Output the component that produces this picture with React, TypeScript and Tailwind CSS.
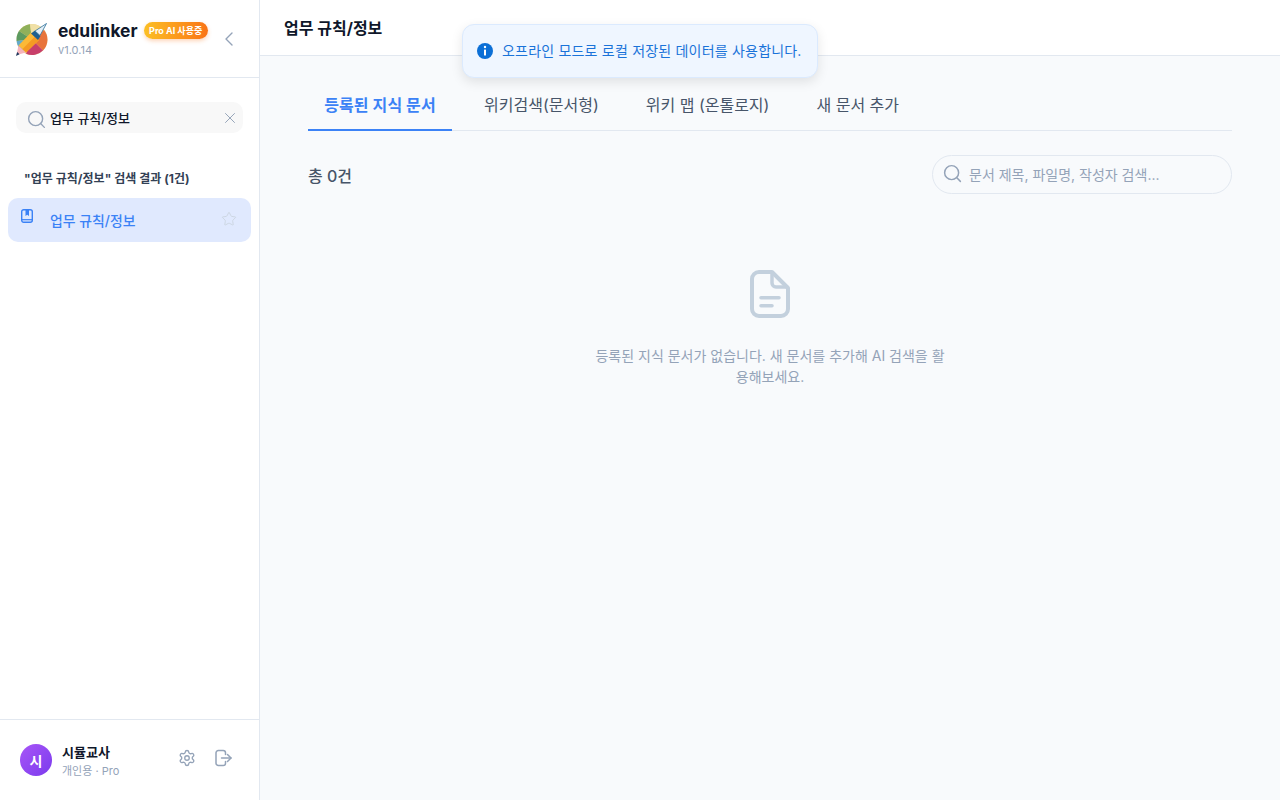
import React from "react";
import { ChevronLeft, Search, X, Star, Settings } from "lucide-react";

function Logo() {
  return (
    <svg width="34" height="34" viewBox="0 0 34 34" className="shrink-0">
      <circle cx="17" cy="17.500" r="15.500" fill="#e9d79a" />
      <path d="M17 17.500 L4 9 A15.500 15.500 0 0 1 15 2.200 Z" fill="#8fb05a" />
      <path d="M17 17.500 L15 2.200 A15.500 15.500 0 0 1 27 6 Z" fill="#f0e0a6" />
      <path d="M17 17.500 L1.600 19 A15.500 15.500 0 0 1 4 9 Z" fill="#5c9a60" />
      <path d="M17 17.500 L8 30 A15.500 15.500 0 0 1 1.600 19 Z" fill="#63aacb" />
      <path d="M17 17.500 L29 8 A15.500 15.500 0 0 1 28 28.500 Z" fill="#e8743b" />
      <path d="M17 17.500 L28 28.500 A15.500 15.500 0 0 1 11 31.800 Z" fill="#c83f6a" />
      <path d="M1.500 33 L3.500 23.500 L11 30.500 Z" fill="#f6b3ba" />
      <path d="M3.500 23.500 L16 10.500 L24 18 L11 30.500 Z" fill="#fcb937" />
      <path d="M7.500 27 L20 14.500 L24 18 L11 30.500 Z" fill="#f59a23" />
      <path d="M16 11.500 L20 8.500 L25.500 14 L23 18 Z" fill="#1f5f8f" />
      <path d="M20 9 L31.500 1.500 L25 13.500 Z" fill="#e3eef7" stroke="#2d7099" strokeWidth="0.8" />
      <path d="M1 34 L2.200 30 L4.500 32.200 Z" fill="#1e3a5f" />
    </svg>
  );
}

function BookIcon() {
  return (
    <svg width="14" height="16" viewBox="0 0 14 16" fill="none" className="mb-[8px] shrink-0">
      <rect x="1.700" y="1.700" width="10.600" height="12.600" rx="2" stroke="#3b82f6" strokeWidth="1.400" />
      <path d="M1.700 11.700 H12.300" stroke="#3b82f6" strokeWidth="1.200" />
      <path d="M5.500 1.500 H9 V8 L7.250 6.800 L5.500 8 Z" fill="#3b82f6" />
    </svg>
  );
}

function FileIcon() {
  return (
    <svg width="48" height="48" viewBox="0 0 48 48" fill="none" stroke="#c3d0dd" strokeWidth="4" strokeLinecap="round" strokeLinejoin="round">
      <path d="M26 2 H13 a7 7 0 0 0 -7 7 V39 a7 7 0 0 0 7 7 H35 a7 7 0 0 0 7 -7 V18 Z" />
      <path d="M26 3 V13 a4 4 0 0 0 4 4 H41" strokeWidth="3.500" />
      <path d="M15 27.700 H33" strokeWidth="3.500" />
      <path d="M15 35.700 H26" strokeWidth="3.500" />
    </svg>
  );
}

function ExitIcon() {
  return (
    <svg width="18" height="18" viewBox="0 0 18 18" fill="none" stroke="#94a3b8" strokeWidth="1.500" strokeLinecap="round" strokeLinejoin="round" className="ml-[18px]">
      <path d="M11.500 5.500 V3.800 A2.300 2.300 0 0 0 9.200 1.500 H4.300 A2.300 2.300 0 0 0 2 3.800 V14.200 A2.300 2.300 0 0 0 4.300 16.500 H9.200 A2.300 2.300 0 0 0 11.500 14.200 V12.500" />
      <path d="M7.500 9 H17" />
      <path d="M13.500 5.500 L17 9 L13.500 12.500" />
    </svg>
  );
}

export default function App() {
  return (
    <div
      className="relative flex h-[800px] w-[1280px] overflow-hidden bg-[#f8fafc] text-[#0f172a]"
      style={{ fontFamily: 'Inter, "Noto Sans CJK KR", sans-serif' }}
    >
      <aside className="flex h-full w-[260px] shrink-0 flex-col border-r border-[#e2e8f0] bg-white">
        <div className="flex h-[78px] items-center border-b border-[#e2e8f0] pl-[15px] pr-[18px]">
          <Logo />
          <div className="ml-[9px] flex flex-col">
            <div className="flex items-center gap-[6px]">
              <span className="text-[17.400px] font-bold leading-[22px] text-[#0f172a]">edulinker</span>
              <span className="flex h-[17px] items-center rounded-full bg-gradient-to-r from-[#fbbf24] to-[#f97316] px-[5.500px] text-[9px] font-bold text-white shadow-[0_2px_4px_rgba(249,115,22,0.3)]">
                Pro AI 사용중
              </span>
            </div>
            <span className="text-[11px] leading-[16px] text-[#94a3b8]">v1.0.14</span>
          </div>
          <ChevronLeft className="ml-auto text-[#94a3b8]" size={24} strokeWidth={1.4} />
        </div>

        <div className="px-4 pt-6">
          <div className="flex h-[31px] items-center rounded-[10px] bg-[#f8f8f8] pl-[9.500px] pr-[4px]">
            <Search size={21} strokeWidth={1.6} className="mt-[4px] shrink-0 text-[#94a3b8]" />
            <span className="ml-[3.500px] pt-[2px] text-[13px] font-medium text-[#0f172a]">업무 규칙/정보</span>
            <X size={18} strokeWidth={1.3} className="ml-auto text-[#94a3b8]" />
          </div>
        </div>

        <div className="mt-[38px] px-6 text-[12px] font-bold leading-4 tracking-[0.03px] text-[#334155]">"업무 규칙/정보" 검색 결과 (1건)</div>

        <div className="mx-2 mt-[11px] flex h-11 items-center rounded-[10px] bg-[#e0e9fe] pl-3 pr-[14px] text-[#3b82f6]">
          <BookIcon />
          <span className="ml-[16px] pt-[2px] text-[13.900px] font-medium">업무 규칙/정보</span>
          <Star size={16} strokeWidth={1.4} className="mb-[3px] ml-auto text-[#cbd5e1]" />
        </div>

        <div className="mt-auto flex h-[81px] items-center border-t border-[#e2e8f0] pb-1 pl-5 pr-[27px]">
          <div className="mt-1 flex h-8 w-8 items-center justify-center rounded-full bg-gradient-to-br from-[#a855f7] to-[#7c3aed] text-[14px] font-bold text-white">시</div>
          <div className="ml-[10px] mt-[6px] flex flex-col">
            <span className="text-[13px] font-bold leading-[18px] text-[#0f172a]">시뮬교사</span>
            <span className="mt-[2px] text-[11px] leading-[16px] text-[#94a3b8]">개인용 · Pro</span>
          </div>
          <Settings size={18} strokeWidth={1.8} className="ml-auto text-[#94a3b8]" />
          <ExitIcon />
        </div>
      </aside>

      <main className="flex min-w-0 flex-1 flex-col">
        <header className="flex h-[56px] shrink-0 items-center border-b border-[#e2e8f0] bg-white px-6">
          <h1 className="text-[16px] font-bold text-[#0f172a]">업무 규칙/정보</h1>
        </header>
        <div className="flex flex-1 flex-col px-12 pt-6">
          <div className="flex h-[51px] border-b border-[#e2e8f0] text-[16px] text-[#475569]">
            <div className="flex h-[51px] w-[144px] items-center justify-center border-b-2 border-[#3b82f6] font-bold tracking-[0.1px] text-[#3b82f6]">등록된 지식 문서</div>
            <div className="ml-4 flex items-center px-4">위키검색(문서형)</div>
            <div className="ml-[15px] flex items-center px-4">위키 맵 (온톨로지)</div>
            <div className="ml-[15px] flex items-center px-4">새 문서 추가</div>
          </div>
          <div className="mt-6 flex items-center justify-between">
            <span className="pt-[2px] text-[16px] font-medium text-[#475569]">총 0건</span>
            <div className="flex h-[39px] w-[300px] items-center rounded-full border border-[#e2e8f0] pl-[9px]">
              <Search size={21} strokeWidth={1.7} className="mb-[2px] text-[#94a3b8]" />
              <span className="ml-[6px] text-[14px] text-[#94a3b8]">문서 제목, 파일명, 작성자 검색...</span>
            </div>
          </div>
          <div className="mt-[76px] flex flex-col items-center">
            <FileIcon />
            <p className="mt-[27px] w-[360px] text-center text-[14px] leading-[21px] text-[#94a3b8]">
              등록된 지식 문서가 없습니다. 새 문서를 추가해 AI 검색을 활용해보세요.
            </p>
          </div>
        </div>
      </main>

      <div className="absolute left-[462px] top-6 flex h-[54px] w-[356px] items-center rounded-xl border border-[#dbeafe] bg-[#eff6ff] pl-[13px] shadow-[0_4px_12px_rgba(0,0,0,0.1)]">
        <svg width="18" height="18" viewBox="0 0 18 18" className="shrink-0">
          <circle cx="9" cy="9" r="8" fill="#0b6fd6" />
          <rect x="8" y="7.500" width="2" height="6" rx="0.5" fill="#fff" />
          <circle cx="9" cy="5" r="1.200" fill="#fff" />
        </svg>
        <span className="ml-2 pb-[2px] text-[14px] tracking-[0.2px] text-[#1a73d9]">오프라인 모드로 로컬 저장된 데이터를 사용합니다.</span>
      </div>
    </div>
  );
}
